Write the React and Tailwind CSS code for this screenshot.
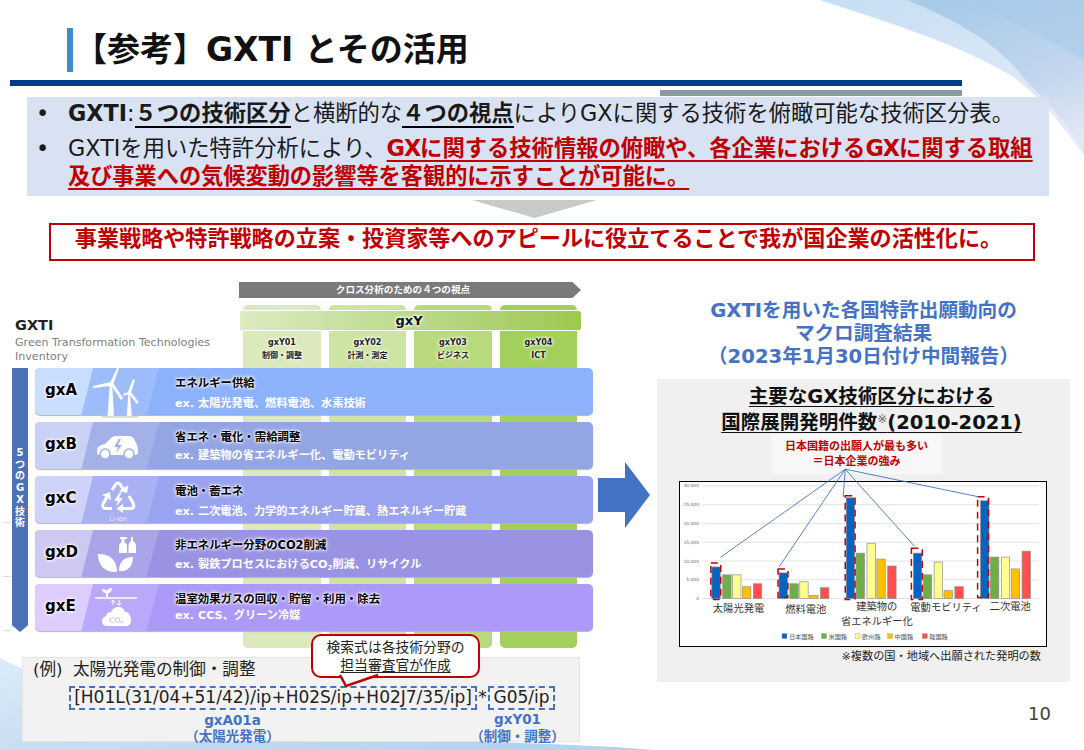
import React from "react";

const glow = "[text-shadow:0_0_2px_#fff,0_0_3px_#fff,0_0_4px_#fff]";

function Turbine() {
  return (
    <svg width="50" height="54" viewBox="0 0 50 54" className="flex-none overflow-visible" fill="#fff">
      <line x1="12" y1="52" x2="48" y2="52" stroke="#b9c4d8" strokeWidth="1" />
      <polygon points="19.8,20 22.2,20 24,51 17.5,51" />
      <polygon points="38.3,29 40,29 41.8,51 36.8,51" />
      <polygon points="20,18 27,3 29,3 23,20" />
      <polygon points="21,17 3,21 3,23 21,21" />
      <polygon points="21,20 23,18 33,33 31,35" />
      <polygon points="38,27 43,14 45,15 40.5,29" />
      <polygon points="39,27 33,29 33,30.5 39,29.5" />
      <polygon points="39,29 41,27 48.5,37 47,39" />
      <circle cx="21" cy="19" r="2" />
      <circle cx="39" cy="28" r="1.6" />
    </svg>
  );
}

function Car({ fill }) {
  return (
    <svg width="50" height="54" viewBox="0 0 50 54" className="flex-none overflow-visible">
      <path fill="#fff" d="M7 33C7 27 10 26 15 25L21 19C22 18 24 17 26 17H38C41 17 44 18 45 22C47 25 48 28 48 33C48 35 47 36 45 36H9C8 36 7 35 7 33Z" />
      <circle cx="15" cy="35" r="5" fill="#fff" stroke={fill} strokeWidth="1.5" />
      <circle cx="39" cy="35" r="5" fill="#fff" stroke={fill} strokeWidth="1.5" />
      <path fill={fill} d="M29 20L24 28H28L26 34L32 26H28L31 20Z" />
    </svg>
  );
}

function Battery() {
  return (
    <svg width="50" height="54" viewBox="0 0 50 54" className="flex-none overflow-visible">
      <g fill="none" stroke="#fff" strokeWidth="3" strokeLinejoin="round">
        <path d="M22 17L26 11C27 9.5 29 9.5 30 11L33 16" />
        <path d="M39 23L43.5 31C44.5 33 43.5 35.5 41 35.5H33" />
        <path d="M22 35.5H15.5C13 35.5 12 33 13 31L17 24" />
      </g>
      <g fill="#fff">
        <polygon points="29,18 37,20 38.5,12" />
        <polygon points="33,31 33,40 26.5,35.5" />
        <polygon points="12,22 20,19 21,27" />
        <path d="M30 19L24 28H28L26 34L33 25H29L31.5 19Z" />
      </g>
      <text x="28" y="47.5" textAnchor="middle" fontSize="6.5" fill="#eef">Li-ion</text>
    </svg>
  );
}

function Bottles() {
  return (
    <svg width="50" height="54" viewBox="0 0 50 54" className="flex-none overflow-visible" fill="#fff">
      <path d="M30 10H37V12H34.5V15C35.5 16 37 17 37 19V26H29V19C29 17 30.5 16 31.5 15V12H30Z" />
      <path d="M41 10H43V14C45 15 46 17 46 19V26H38.5V19C38.5 17 39.5 15 41 14Z" />
      <path d="M8 27C20 27 27 33 27 45C15 46 8 38 8 27Z" />
      <path d="M43 30C35 30 29 34 29 44C37 45 43 40 43 30Z" />
    </svg>
  );
}

function Co2({ fill }) {
  return (
    <svg width="50" height="54" viewBox="0 0 50 54" className="flex-none overflow-visible" fill="#fff">
      <line x1="5" y1="17" x2="47" y2="17" stroke="#fff" strokeWidth="1.6" />
      <path d="M16 16V12C13 12 12 10 12 8C15 8 16 9 17 10C18 8 20 7 22 7C22 10 20 12 18 12V16Z" />
      <path d="M23 19V24M20.8 21.5L23 19L25.2 21.5M29 19V24M26.8 22L29 24.5L31.2 22" fill="none" stroke="#fff" strokeWidth="1" />
      <path d="M17 45C13 45 12 42 12 40C12 37 14 35.5 16 35.5C16 33 18 31 21 31C22 28 25 26 28 26C32 26 34 28 35 31C38 31 40 33 40 35.5C41 36 41 38 41 40C41 43 39 45 36 45Z" />
      <text x="26" y="41.5" textAnchor="middle" fontSize="7.5" fill={fill}>CO₂</text>
    </svg>
  );
}

const rows = [
  { id: "gxA", c1: "bg-[#c9ddff]", c2: "bg-[#9dbdfa]", c3: "bg-[#8cb2fb]", fill: "#9dbdfa", icon: Turbine, title: "エネルギー供給", ex: "ex. 太陽光発電、燃料電池、水素技術", gap: "gap-[7px]", pad: "pt-[8px]", line: false },
  { id: "gxB", c1: "bg-[#c9d2f4]", c2: "bg-[#a2b1e7]", c3: "bg-[#93a5e3]", fill: "#a2b1e7", icon: Car, title: "省エネ・電化・需給調整", ex: "ex. 建築物の省エネルギー化、電動モビリティ", gap: "gap-[5px]", pad: "pt-[8px]", line: false },
  { id: "gxC", c1: "bg-[#cfd2f9]", c2: "bg-[#a9b0f3]", c3: "bg-[#9aa3ef]", fill: "#a9b0f3", icon: Battery, title: "電池・蓄エネ", ex: "ex. 二次電池、力学的エネルギー貯蔵、熱エネルギー貯蔵", gap: "gap-[7px]", pad: "pt-[8px]", line: true },
  { id: "gxD", c1: "bg-[#cdc9f2]", c2: "bg-[#aaa5e8]", c3: "bg-[#9a93e3]", fill: "#aaa5e8", icon: Bottles, title: "非エネルギー分野のCO2削減", ex: <>ex. 製鉄プロセスにおけるCO<sub className="text-[7px]">2</sub>削減、リサイクル</>, gap: "gap-[6px]", pad: "pt-[8px]", line: true },
  { id: "gxE", c1: "bg-[#dccdfe]", c2: "bg-[#baa9fa]", c3: "bg-[#ac99f8]", fill: "#baa9fa", icon: Co2, title: "温室効果ガスの回収・貯留・利用・除去", ex: "ex. CCS、グリーン冷媒", gap: "gap-[3px]", pad: "pt-[8px]", line: true },
];

function Row({ r }) {
  const Icon = r.icon;
  return (
    <div className={`relative h-[47px] w-[558px] rounded-[5px] flex items-center shadow-[0_1px_1px_#b5b5b5] ${r.c3}`}>
      {r.line && <div className="absolute left-[-32px] bottom-0 w-[8px] h-px bg-[#dddddd]" />}
      <div className={`absolute inset-y-0 left-0 w-[124px] rounded-l-[5px] ${r.c2} [clip-path:polygon(0_0,100%_0,90%_100%,0_100%)]`} />
      <div className={`absolute inset-y-0 left-0 w-[58px] rounded-l-[5px] ${r.c1} [clip-path:polygon(0_0,100%_0,80%_100%,0_100%)]`} />
      <div className={`relative w-[55px] flex-none pl-[10px] pb-[3px] text-[15px] font-bold text-black ${glow}`}>{r.id}</div>
      <div className="relative w-[85px] flex-none">
        <Icon fill={r.fill} />
      </div>
      <div className={`relative flex flex-col self-start ${r.gap} ${r.pad}`}>
        <div className={`text-[11.4px] leading-[14px] font-bold text-black whitespace-nowrap ${glow}`}>{r.title}</div>
        <div className="text-[11.2px] leading-[14px] font-semibold text-white whitespace-nowrap">{r.ex}</div>
      </div>
    </div>
  );
}

const cols = [
  { c: "bg-[#dbe9bc]", w: "w-[78px]", a: "gxY01", b: "制御・調整" },
  { c: "bg-[#cde4a2]", w: "w-[77px]", a: "gxY02", b: "計測・測定" },
  { c: "bg-[#b8da7c]", w: "w-[78px]", a: "gxY03", b: "ビジネス" },
  { c: "bg-[#a3d05c]", w: "w-[77px]", a: "gxY04", b: "ICT" },
];

const groups = [
  { xs: [710, 721, 731, 741, 752], tops: [567, 575, 575, 587, 584] },
  { xs: [778, 789, 799, 809, 820], tops: [573, 584, 582, 596, 588] },
  { xs: [846, 856, 867, 877, 888], tops: [497, 553, 543, 559, 566] },
  { xs: [914, 924, 935, 945, 956], tops: [553, 575, 562, 591, 587] },
  { xs: [982, 992, 1003, 1013, 1024], tops: [500, 557, 557, 569, 551] },
];
const barColors = ["#0563c1", "#70ad47", "#ffff8f", "#ffc000", "#ff5050"];
const dashed = [
  [709, 563, 10, 37],
  [777, 569, 10, 29],
  [845, 495, 10, 105],
  [912, 548, 11, 52],
  [979, 496, 11, 102],
];
const legend = [
  [781, "日本国籍"],
  [821, "米国籍"],
  [855, "欧州籍"],
  [888, "中国籍"],
  [923, "韓国籍"],
];
const ticks = ["30,000", "25,000", "20,000", "15,000", "10,000", "5,000", "0"];
const labels = [
  [737, 613, "太陽光発電"],
  [805, 614, "燃料電池"],
  [877, 611, "建築物の"],
  [877, 626, "省エネルギー化"],
  [947, 612, "電動モビリティ"],
  [1012, 611, "二次電池"],
];

function Chart() {
  return (
    <svg viewBox="679 481 368 166" className="w-full h-full overflow-visible block">
      {ticks.map((t, i) => (
        <g key={t}>
          <line x1="701" x2="1041" y1={485 + i * 19} y2={485 + i * 19} stroke="#e2e2e2" strokeWidth="1" />
          <text x="697" y={486.5 + i * 19} textAnchor="end" fontSize="4.5" fill="#666">{t}</text>
        </g>
      ))}
      {groups.map((g, i) =>
        g.xs.map((x, j) => (
          <rect key={`${i}-${j}`} x={x} y={g.tops[j]} width="8.5" height={599 - g.tops[j]} fill={barColors[j]} stroke="#8f8f8f" strokeWidth="0.7" />
        ))
      )}
      {dashed.map(([x, y, w, h]) => (
        <rect key={x} x={x} y={y} width={w} height={h} fill="none" stroke="#c00000" strokeWidth="1.5" strokeDasharray="7 5" />
      ))}
      {[[719, 557], [778, 567], [843, 496], [915, 546], [980, 496]].map(([x, y]) => (
        <line key={x} x1="845" y1="468" x2={x} y2={y} stroke="#4472c4" strokeWidth="0.9" />
      ))}
      {labels.map(([x, y, t]) => (
        <text key={t} x={x} y={y} textAnchor="middle" fontSize="10.4" fill="#333">{t}</text>
      ))}
      {legend.map(([x, t], i) => (
        <g key={t}>
          <rect x={x} y="634.5" width="5" height="5" fill={barColors[i]} stroke="#999" strokeWidth="0.4" />
          <text x={x + 7} y="639.5" fontSize="6.3" fill="#555">{t}</text>
        </g>
      ))}
    </svg>
  );
}

function Background() {
  return (
    <svg className="absolute inset-0" width="1084" height="750" viewBox="0 0 1084 750">
      <defs>
        <linearGradient id="a" x1="0.1" y1="0" x2="0.7" y2="1">
          <stop offset="0" stopColor="#c7def3" />
          <stop offset="1" stopColor="#e4edf8" />
        </linearGradient>
        <linearGradient id="b" x1="0.3" y1="0" x2="0.7" y2="1">
          <stop offset="0" stopColor="#a8cbe9" />
          <stop offset="0.6" stopColor="#c3d6ee" />
          <stop offset="1" stopColor="#e3e8f6" />
        </linearGradient>
        <linearGradient id="c" x1="0" y1="0" x2="1" y2="0.6">
          <stop offset="0" stopColor="#dcebf9" />
          <stop offset="0.6" stopColor="#c3daf1" />
          <stop offset="1" stopColor="#b5d3ee" />
        </linearGradient>
      </defs>
      <path fill="url(#a)" d="M820 0C880 20 950 40 1010 75C1040 95 1065 130 1084 155V0Z" />
      <path fill="url(#b)" d="M907 0C960 22 1000 45 1025 80C1050 105 1070 125 1084 155V0Z" />
      <path fill="#a9cae9" d="M970 0C1010 20 1050 40 1084 60V0Z" opacity="0.6" />
      <path fill="url(#c)" d="M0 658C60 690 200 725 380 738C480 742 580 744 655 750H0Z" />
    </svg>
  );
}

export default function App() {
  return (
    <div className="relative w-[1084px] h-[750px] overflow-hidden bg-white font-['DejaVu_Sans','Noto_Sans_CJK_JP',sans-serif] text-black">
      <Background />
      <div className="relative flex flex-col">
        <header className="flex items-stretch h-[44px] mt-[28px] ml-[67px]">
          <div className="w-[6px] bg-[#3f8ccb]" />
          <h1 className="ml-[1px] pb-[1px] text-[33px] leading-[44px] font-bold whitespace-nowrap text-[#111]">【参考】GXTI とその活用</h1>
        </header>
        <div className="ml-[10px] mt-[8px] w-[952px] h-[6px] bg-[#003a8c]" />
        <div className="ml-[660px] mt-[4px] w-[302px] h-[6px] bg-[#8c9ba3]" />

        <div className="ml-[27px] mt-[1px] w-[1022px] h-[99px] bg-[#d9e2f3] pt-[2px] text-[22.3px] leading-[28px] text-[#1a1a1a]">
          <div className="flex whitespace-nowrap">
            <span className="w-[41px] pl-[9px] flex-none">•</span>
            <p>
              <b>GXTI</b>:<span className="font-bold border-b-2 border-black leading-[25px] inline-block">５つの技術区分</span>と横断的な<span className="font-bold border-b-2 border-black leading-[25px] inline-block">４つの視点</span>によりGXに関する技術を俯瞰可能な技術区分表。
            </p>
          </div>
          <div className="flex mt-[6px] whitespace-nowrap">
            <span className="w-[41px] pl-[9px] flex-none">•</span>
            <div>
              <p>
                GXTIを用いた特許分析により、<span className="font-bold text-[#c00000] underline decoration-2 underline-offset-[4px] decoration-[#c00000]"><span className="tracking-[-1px]">GX</span>に関する技術情報の俯瞰や、各企業における<span className="tracking-[-1px]">GX</span>に関する取組</span>
              </p>
              <p className="font-bold text-[22.2px] text-[#c00000] underline decoration-2 underline-offset-[4px] decoration-[#c00000]">及び事業への気候変動の影響等を客観的に示すことが可能に。</p>
            </div>
          </div>
        </div>

        <div className="ml-[472px] mt-[4px] w-[125px] h-[18px] bg-[#c9c9c9] [clip-path:polygon(0_0,100%_0,50%_100%)]" />

        <div className="ml-[49px] mt-[5px] w-[986px] h-[38px] border-2 border-[#c00000] bg-white flex items-center justify-center pb-[6px] pr-[7px] text-[22.1px] font-bold text-[#c00000] whitespace-nowrap">
          事業戦略や特許戦略の立案・投資家等へのアピールに役立てることで我が国企業の活性化に。
        </div>

        <section className="flex mt-[21px] items-start">
          <div className="relative w-[598px] flex-none">
            <div className="ml-[239px] w-[342px] h-[16px] pr-[14px] bg-[#7a7a7a] [clip-path:polygon(0_0,97.5%_0,100%_50%,97.5%_100%,0_100%)] flex items-center justify-center text-[9.6px] font-bold text-white">
              クロス分析のための４つの視点
            </div>
            <div className="flex mt-[7px]">
              <div className="w-[243px] flex-none pl-[15px] pt-[12px]">
                <div className="text-[14.5px] leading-[17px] font-bold text-[#222]">GXTI</div>
                <div className="mt-[2px] text-[11.1px] leading-[14px] text-[#808080] whitespace-nowrap">Green Transformation Technologies<br />Inventory</div>
              </div>
              <div className="relative flex gap-[8px] h-[343px]">
                {cols.map((c) => (
                  <div key={c.a} className={`${c.w} ${c.c} rounded-[5px] pt-[31px] text-center text-[8px] leading-[13px] font-bold text-[#222] ${glow}`}>
                    <div>{c.a}</div>
                    <div>{c.b}</div>
                  </div>
                ))}
                <div className={`absolute left-[-4px] top-[5px] w-[343px] h-[21px] rounded-[3px] border border-white bg-gradient-to-r from-[#dcebc0] to-[#9dc84f] flex items-center justify-center pr-[3px] text-[13px] font-bold text-[#111] ${glow}`}>gxY</div>
              </div>
            </div>

            <div className="absolute left-[12px] top-[86px] flex gap-[7px]">
              <div className="w-[16px] h-[264px] bg-[#4a72b8] [clip-path:polygon(0_0,100%_0,100%_97.4%,50%_100%,0_97.4%)] flex flex-col items-center pt-[79px] text-[10px] leading-[11.7px] font-bold text-white">
                {["5", "つ", "の", "G", "X", "技", "術"].map((ch) => (
                  <span key={ch}>{ch}</span>
                ))}
              </div>
              <div className="flex flex-col gap-[7px]">
                {rows.map((r) => (
                  <Row key={r.id} r={r} />
                ))}
              </div>
            </div>

            <div className="mt-[9px] ml-[22px] w-[558px] h-[85px] bg-[#f2f2f2] border border-[#e4e4e4] pl-[10px] pt-[1px] text-[#222]">
              <div className="flex text-[16.6px] leading-[22px] whitespace-nowrap">
                <span className="w-[40px] flex-none">(例)</span>
                <span>太陽光発電の制御・調整</span>
              </div>
              <div className="flex items-center mt-[4px] ml-[36px] text-[17px]">
                <div className="w-[408px] h-[24px] border-2 border-dashed border-[#4472c4] flex items-center justify-center whitespace-nowrap">[H01L(31/04+51/42)/ip+H02S/ip+H02J7/35/ip]</div>
                <div className="w-[11px] text-center">*</div>
                <div className="w-[67px] h-[24px] border-2 border-dashed border-[#4472c4] flex items-center justify-center whitespace-nowrap">G05/ip</div>
              </div>
              <div className="flex ml-[36px] text-[13.5px] leading-[16px] font-bold text-[#4472c4]">
                <div className="w-[419px] pr-[92px] pt-[1px] flex flex-col items-center">
                  <div>gxA01a</div>
                  <div className="whitespace-nowrap">（太陽光発電）</div>
                </div>
                <div className="w-[67px] pr-[8px] flex flex-col items-center">
                  <div>gxY01</div>
                  <div className="whitespace-nowrap pt-[1px]">（制御・調整）</div>
                </div>
              </div>
            </div>

            <div className="absolute left-[311px] top-[352px] w-[169px] h-[44px] rounded-[10px] border-[2.5px] border-[#c00000] bg-white flex flex-col items-center justify-center text-[13.8px] leading-[18px] text-[#222] whitespace-nowrap">
              <div>検索式は各技術分野の</div>
              <div className="underline underline-offset-2">担当審査官が作成</div>
              <svg className="absolute left-[25px] top-[38px] overflow-visible" width="40" height="14" viewBox="0 0 40 14">
                <polygon points="2,0 38,0 8,12" fill="#fff" />
                <polyline points="2,1 8,12 40,1" fill="none" stroke="#c00000" strokeWidth="2.5" />
              </svg>
            </div>
          </div>

          <svg className="flex-none mt-[180px]" width="52" height="66" viewBox="0 0 52 66">
            <polygon points="0,16 27,16 27,0 52,33 27,66 27,50 0,50" fill="#4472c4" />
          </svg>

          <div className="ml-[7px] w-[413px] flex-none">
            <div className="mt-[17px] h-[80px] flex flex-col items-center text-[19.6px] leading-[23px] font-bold text-[#4472c4] whitespace-nowrap">
              <div>GXTIを用いた各国特許出願動向の</div>
              <div>マクロ調査結果</div>
              <div>（2023年1月30日付け中間報告）</div>
            </div>
            <div className="h-[303px] bg-[#f0f0f0] pt-[5px]">
              <div className="pl-[16px] flex flex-col items-center text-[19.5px] leading-[26px] font-bold text-[#111] underline underline-offset-[3px] whitespace-nowrap">
                <div>主要なGX技術区分における</div>
                <div>国際展開発明件数<sup className="text-[12px] font-normal text-[#666]">※</sup>(2010-2021)</div>
              </div>
              <div className="ml-[114px] -mt-[2px] w-[171px] h-[40px] bg-[#f7f7f7] flex flex-col items-center justify-center text-[11px] leading-[15px] font-bold text-[#c00000] whitespace-nowrap">
                <div>日本国籍の出願人が最も多い</div>
                <div>＝日本企業の強み</div>
              </div>
              <div className="ml-[22px] mt-[7px] w-[368px] h-[166px] bg-white border border-black">
                <Chart />
              </div>
              <div className="mt-[2px] pr-[29px] text-right text-[11.2px] leading-[16px] text-[#222] whitespace-nowrap">※複数の国・地域へ出願された発明の数</div>
            </div>
            <div className="mt-[20px] pr-[19px] text-right text-[18px] leading-[24px] text-[#404040]">10</div>
          </div>
        </section>
      </div>
    </div>
  );
}
